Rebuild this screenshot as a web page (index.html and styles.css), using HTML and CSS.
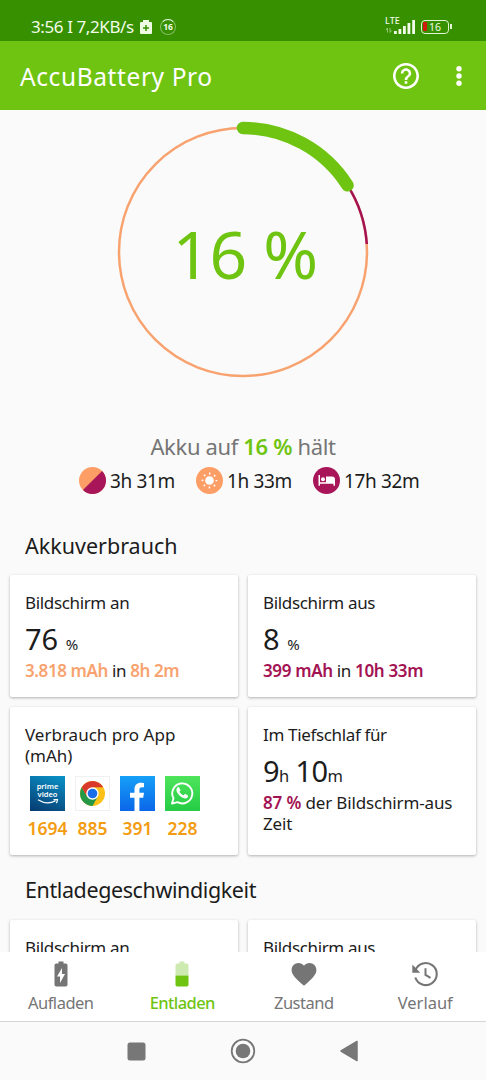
FILE: index.html
```html
<!DOCTYPE html>
<html lang="de">
<head>
    <meta charset="UTF-8">
    <title>AccuBattery Pro</title>
    <link rel="stylesheet" href="styles.css">
</head>
<body>

<div class="status">
    <span class="clock">3:56 I 7,2KB/s</span>
    <svg class="saver" width="12" height="14" viewBox="0 0 12 14">
        <path fill="#eefbe2" d="M3 0h6v2h2q1 0 1 1v10q0 1-1 1H1q-1 0-1-1V3q0-1 1-1h2z"/>
        <path stroke="#369000" stroke-width="1.5" d="M3 8h6M6 5v6"/>
    </svg>
    <span class="ring">16</span>
    <div class="network">
        <span class="lte">LTE</span>
        <svg width="32" height="17" viewBox="0 0 32 17">
            <path stroke="#a9d68c" fill="none" stroke-width=".8" d="M2.500 14.500v-4.500l-1.500 2M5 10v4.500l1.500-2"/>
            <path stroke="#f2fbea" stroke-width="2.800" d="M10.400 16v-3M14.900 16v-5M19.400 16V8M23.900 16V5M28.600 16V2"/>
        </svg>
    </div>
    <div class="battery"><span>16</span></div>
    <div class="tip"></div>
</div>

<div class="appbar">
    <h1>AccuBattery Pro</h1>
    <svg width="26" height="26" viewBox="2 2 20 20">
        <path fill="#fff" d="M11 18h2v-2h-2v2zm1-16C6.480 2 2 6.480 2 12s4.480 10 10 10 10-4.480 10-10S17.520 2 12 2zm0 18c-4.410 0-8-3.590-8-8s3.590-8 8-8 8 3.590 8 8-3.590 8-8 8zm0-14c-2.210 0-4 1.790-4 4h2c0-1.100.9-2 2-2s2 .9 2 2c0 2-3 1.750-3 5h2c0-2.250 3-2.500 3-5 0-2.210-1.790-4-4-4z"/>
    </svg>
    <svg class="more" width="6" height="20" viewBox="0 0 6 20">
        <g fill="#fff"><circle cx="3" cy="2.700" r="2.700"/><circle cx="3" cy="10" r="2.700"/><circle cx="3" cy="17.300" r="2.700"/></g>
    </svg>
</div>

<div class="content">
    <div class="gauge">
        <svg width="270" height="270" viewBox="0 0 270 270" fill="none">
            <circle cx="135" cy="135" r="124" stroke="#f8a36f" stroke-width="2.500"/>
            <path stroke="#a31353" stroke-width="2.500" d="M239.700 68.600A124 124 0 0 1 258.800 127"/>
            <path stroke="#6fc411" stroke-width="12.500" stroke-linecap="round" d="M135 11A124 124 0 0 1 239.500 68.300"/>
        </svg>
        <span class="percent">16 %</span>
    </div>

    <p class="lasts">Akku auf <b>16 %</b> hält</p>
    <div class="times">
        <div class="time">
            <svg width="27" height="27" viewBox="0 0 27 27">
                <circle cx="13.500" cy="13.500" r="13.500" fill="#fd9e66"/>
                <path fill="#a81558" d="M23.050 3.950A13.500 13.500 0 0 1 3.950 23.050z"/>
            </svg>
            <span>3h 31m</span>
        </div>
        <div class="time">
            <svg width="27" height="27" viewBox="0 0 27 27">
                <circle cx="13.500" cy="13.500" r="13.500" fill="#fd9e66"/>
                <circle cx="13.500" cy="13.500" r="4.300" fill="#fff"/>
                <circle cx="13.500" cy="13.500" r="7" fill="none" stroke="#fff" stroke-width="1.800" stroke-dasharray="1.600 3.898" stroke-dashoffset=".8"/>
            </svg>
            <span>1h 33m</span>
        </div>
        <div class="time">
            <svg width="27" height="27" viewBox="0 0 27 27">
                <circle cx="13.500" cy="13.500" r="13.500" fill="#a81558"/>
                <path fill="#fff" d="M5.500 8H7v7.300h6V9.500h6q3 0 3 3v6.200h-1.500v-2H7v2H5.500z"/>
                <circle cx="10" cy="12.300" r="2" fill="#fff"/>
            </svg>
            <span>17h 32m</span>
        </div>
    </div>

    <h2>Akkuverbrauch</h2>
    <div class="cards">
        <div class="card short">
            <h3>Bildschirm an</h3>
            <p class="big">76 <small>%</small></p>
            <p class="sub orange"><b>3.818 mAh</b> in <b>8h 2m</b></p>
        </div>
        <div class="card short">
            <h3>Bildschirm aus</h3>
            <p class="big">8 <small>%</small></p>
            <p class="sub purple"><b>399 mAh</b> in <b>10h 33m</b></p>
        </div>
        <div class="card tall">
            <h3 class="wide">Verbrauch pro App (mAh)</h3>
            <div class="apps">
                <div class="app">
                    <div class="icon prime">
                        <span>prime</span>
                        <span>video</span>
                        <svg width="22" height="5" viewBox="0 0 22 5">
                            <path fill="none" stroke="#fff" stroke-width="1.200" d="M1 .8Q10 6.500 18.500 1.800M16.500.6h4q0 2-1.300 3.400"/>
                        </svg>
                    </div>
                    <b>1694</b>
                </div>
                <div class="app">
                    <div class="icon chrome">
                        <svg width="35" height="35" viewBox="-17.500 -17.500 35 35">
                            <circle r="12.500" fill="#fbc116"/>
                            <path fill="#d93a2b" d="M0 0L-10.800-6.250A12.500 12.500 0 0 1 10.800-6.250H0z"/>
                            <path fill="#249847" d="M-10.800-6.250A12.500 12.500 0 0 0 0 12.500L5.400 3.100 0 0-5.400 3.100z"/>
                            <path fill="#d93a2b" d="M-10.800-6.250L-5.400 3.100 0 0V-6.250z"/>
                            <circle r="6.200" fill="#fff"/>
                            <circle r="4.800" fill="#1a6fe8"/>
                        </svg>
                    </div>
                    <b>885</b>
                </div>
                <div class="app">
                    <div class="icon facebook">
                        <svg width="35" height="35" viewBox="0 0 35 35">
                            <path fill="#fff" d="M14.500 35V21.800H10v-5h4.500v-3.600c0-4.300 2.500-6.500 6.300-6.500 1.500 0 3.200.3 3.200.3v4.300h-2c-2 0-2.600 1.200-2.600 2.500v3H24l-.8 5h-3.800V35z"/>
                        </svg>
                    </div>
                    <b>391</b>
                </div>
                <div class="app">
                    <div class="icon whatsapp">
                        <svg width="35" height="35" viewBox="0 0 35 35">
                            <path fill="none" stroke="#fff" stroke-width="1.900" stroke-linejoin="round" d="M7 27.600l1.500-5.400a10 10 0 1 1 4 4z"/>
                            <path fill="#fff" d="M14 11.500c-.5-.6-1-.5-1.500 0-3 3 1 7.300 3.600 9.200 3 2.200 6 2.300 6.900 0 .3-.9.200-1.200-.4-1.500l-2.200-1.100c-.6-.3-.8.1-1.600 1.100-.4.500-3.800-1.900-4.300-3.500.9-1.100 1.100-1.400.8-2z"/>
                        </svg>
                    </div>
                    <b>228</b>
                </div>
            </div>
        </div>
        <div class="card tall">
            <h3>Im Tiefschlaf für</h3>
            <p class="big sleep">9<small>h</small> 10<small>m</small></p>
            <p class="sub purple"><b>87 %</b> der Bildschirm-aus Zeit</p>
        </div>
    </div>

    <h2 class="speed">Entladegeschwindigkeit</h2>
    <div class="cards">
        <div class="card short"><h3>Bildschirm an</h3></div>
        <div class="card short"><h3>Bildschirm aus</h3></div>
    </div>
</div>

<div class="tabs">
    <div class="tab">
        <svg width="26" height="26" viewBox="0 0 26 26">
            <path fill="#757575" d="M10.500.5h5v2h2.300q1.700 0 1.700 1.700v19.600q0 1.700-1.700 1.700H8.200q-1.700 0-1.700-1.700V4.200q0-1.700 1.700-1.700h2.300z"/>
            <path fill="#fff" d="M14 7v6h3l-5 9v-6.500H9z"/>
        </svg>
        <span>Aufladen</span>
    </div>
    <div class="tab active">
        <svg width="26" height="26" viewBox="0 0 26 26">
            <path fill="#cdebb0" d="M10.500.5h5v2h2.300q1.700 0 1.700 1.700V14.500h-13V4.200q0-1.700 1.700-1.700h2.300z"/>
            <path fill="#6fc411" d="M6.500 14.500h13v9.300q0 1.700-1.700 1.700H8.200q-1.700 0-1.700-1.700z"/>
        </svg>
        <span>Entladen</span>
    </div>
    <div class="tab">
        <svg width="26" height="26" viewBox="1.500 1.300 21 21">
            <path fill="#757575" d="M12 21.350l-1.450-1.320C5.400 15.360 2 12.280 2 8.500 2 5.420 4.420 3 7.500 3c1.740 0 3.410.81 4.500 2.090C13.090 3.810 14.760 3 16.500 3 19.580 3 22 5.420 22 8.500c0 3.780-3.400 6.860-8.550 11.540L12 21.350z"/>
        </svg>
        <span>Zustand</span>
    </div>
    <div class="tab">
        <svg width="26" height="26" viewBox="0 0 26 26">
            <path fill="none" stroke="#757575" stroke-width="2.100" d="M3.500 9A11 11 0 1 1 3.300 16.500"/>
            <path fill="#757575" d="M.3 3.500v8.300h8z"/>
            <path fill="none" stroke="#757575" stroke-width="2" d="M13.500 7.300v6.600l5 3"/>
        </svg>
        <span class="wide">Verlauf</span>
    </div>
</div>

<div class="sysnav">
    <svg width="243" height="26" viewBox="0 0 243 26">
        <rect x="5.500" y="4.500" width="18" height="18" rx="2.500" fill="#777"/>
        <circle cx="121" cy="13" r="11.300" fill="none" stroke="#777" stroke-width="1.800"/>
        <circle cx="121" cy="13" r="7.300" fill="#777"/>
        <path fill="#777" stroke="#777" stroke-width="1.500" stroke-linejoin="round" d="M235 3.500v19L219 13z"/>
    </svg>
</div>

</body>
</html>
```
FILE: styles.css
```css
* {
    box-sizing: border-box;
}
body {
    margin: 0;
    width: 486px;
    height: 1080px;
    overflow: hidden;
    background-color: #fafafa;
    font-family: "Noto Sans", sans-serif;
    color: #1c1c1c;
}
h1, h2, h3, p {
    margin: 0;
    font-weight: 400;
}
svg {
    display: block;
}
b {
    font-weight: 600;
}

.status {
    display: flex;
    align-items: center;
    height: 41px;
    padding: 12px 34px 0 31px;
    background-color: #369000;
    color: #f2fbea;
}
.clock {
    width: 109px;
    font-size: 17px;
    line-height: 28px;
    letter-spacing: -0.4px;
    white-space: nowrap;
}
.ring {
    width: 16px;
    height: 16px;
    margin-left: 8px;
    border: 1px solid #83bd61;
    border-top-color: #f2fbea;
    border-radius: 50%;
    font-size: 8.5px;
    font-weight: 700;
    line-height: 14px;
    text-align: center;
}
.network {
    display: grid;
    margin-left: auto;
}
.network > * {
    grid-area: 1 / 1;
}
.lte {
    margin-top: -1px;
    font-size: 9px;
    font-weight: 500;
    line-height: 8px;
}
.battery {
    display: flex;
    align-items: center;
    width: 28px;
    height: 14px;
    margin-left: 4px;
    padding: 1px;
    border: 1px solid #e2f5d4;
    border-radius: 4px;
    font-size: 10.5px;
    line-height: 10px;
}
.battery::before {
    content: "";
    width: 4px;
    height: 9px;
    margin-right: 2px;
    border-radius: 1px;
    background-color: #d01c0c;
}
.tip {
    width: 2px;
    height: 5px;
    margin-left: 1px;
    background-color: #e2f5d4;
}

.appbar {
    display: flex;
    align-items: center;
    height: 69px;
    padding: 0 24px 0 20px;
    background-color: #6fc411;
    color: #fff;
}
.appbar h1 {
    flex: 1;
    padding-top: 1px;
    font-size: 24.5px;
    letter-spacing: 0.6px;
}
.more {
    margin-left: 37px;
}

.content {
    height: 842px;
    overflow: hidden;
}
.gauge {
    display: grid;
    place-items: center;
    padding-top: 7px;
}
.gauge > * {
    grid-area: 1 / 1;
}
.percent {
    padding: 2px 0 0 4px;
    font-size: 66px;
    line-height: 80px;
    letter-spacing: -0.6px;
    color: #6fc411;
}
.lasts {
    margin-top: 45px;
    font-size: 22px;
    line-height: 28px;
    letter-spacing: -0.35px;
    text-align: center;
    color: #757575;
}
.lasts b {
    color: #6fc411;
}
.times {
    display: flex;
    height: 27px;
    margin: 7px 0 0 79px;
}
.time {
    display: flex;
    align-items: center;
    gap: 4px;
    width: 117px;
    font-size: 19px;
    letter-spacing: -0.35px;
    white-space: nowrap;
}

h2 {
    padding: 37px 25px 14px;
    font-size: 21.5px;
    line-height: 30px;
}
h2.speed {
    padding: 20px 25px 15px;
    letter-spacing: -0.4px;
}
.cards {
    display: grid;
    grid-template-columns: 1fr 1fr;
    gap: 10px;
    padding: 0 10px;
}
.card {
    padding: 17px 15px 0;
    border-radius: 2px;
    background-color: #fff;
    box-shadow: 0 1px 3px rgba(0, 0, 0, 0.3);
}
.short {
    height: 122px;
}
.tall {
    height: 148px;
}
h3, .sub {
    font-size: 17px;
    line-height: 21px;
    letter-spacing: -0.35px;
}
h3.wide {
    letter-spacing: 0;
}
.big {
    height: 36px;
    margin: 8px 0 3px;
    font-size: 29px;
    line-height: 36px;
}
.big small {
    font-size: 15px;
    line-height: 1;
}
.sleep {
    letter-spacing: -0.6px;
}
.sleep small {
    font-size: 16.5px;
}
.sub.orange {
    letter-spacing: -0.4px;
}
.tall .sub {
    letter-spacing: -0.15px;
}
.orange b {
    color: #f8a36f;
}
.purple b {
    color: #a31353;
}

.apps {
    display: flex;
    margin-top: 10px;
}
.app {
    display: flex;
    flex-direction: column;
    align-items: center;
    width: 45px;
    font-size: 17.5px;
    line-height: 34px;
    color: #f39c12;
}
.icon {
    width: 35px;
    height: 35px;
}
.prime {
    display: flex;
    flex-direction: column;
    align-items: center;
    padding-top: 6px;
    background: linear-gradient(20deg, #063a70, #0a93c8);
    font-size: 7.5px;
    font-weight: 600;
    line-height: 8px;
    color: #fff;
}
.prime svg {
    margin-top: 1px;
}
.chrome {
    box-shadow: inset 0 0 0 1px #f0f0f0;
}
.facebook {
    background: linear-gradient(#16a0f8, #0b66e8);
}
.whatsapp {
    background: linear-gradient(#4ee45c, #25cc45);
}

.tabs {
    display: flex;
    height: 70px;
    border-bottom: 1px solid #d5d5d5;
    background-color: #fff;
}
.tab {
    flex: 1;
    display: flex;
    flex-direction: column;
    align-items: center;
    padding-top: 9px;
    font-size: 16.5px;
    line-height: 31px;
    letter-spacing: -0.5px;
    color: #757575;
}
.tab .wide {
    letter-spacing: 0;
}
.active {
    color: #6fc411;
}
.active span {
    font-weight: 500;
    letter-spacing: -0.6px;
}
.sysnav {
    display: flex;
    justify-content: center;
    padding-top: 16px;
}
```
